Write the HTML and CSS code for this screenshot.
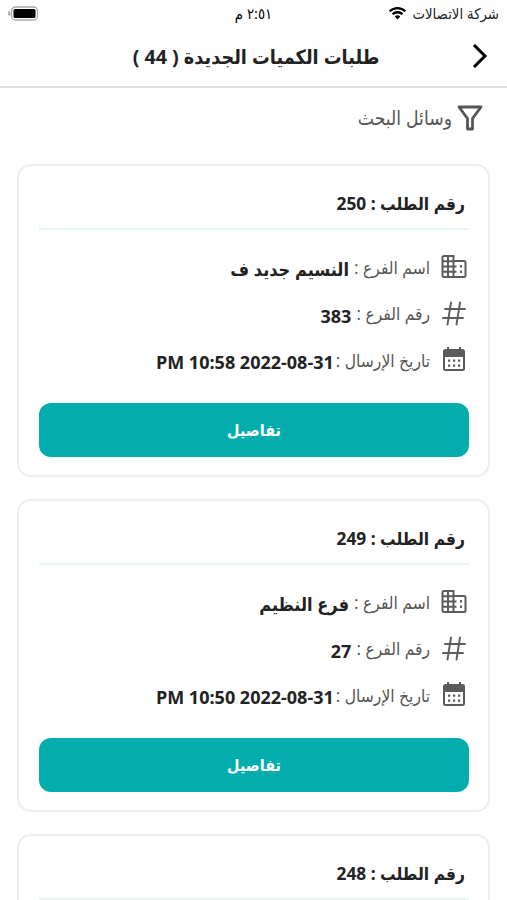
FILE: index.html
```html
<!DOCTYPE html>
<html lang="ar" dir="rtl">
<head>
    <meta charset="UTF-8">
    <meta name="viewport" content="width=device-width, initial-scale=1.0">
    <title>طلبات الكميات الجديدة</title>
    <link rel="stylesheet" href="styles.css">
</head>
<body>
    <!-- Shared icons -->
    <svg class="icon-defs" width="0" height="0">
        <symbol id="icon-branch" viewBox="0 0 26 26">
            <path d="M3 2h9.500v21H3a1.500 1.500 0 0 1-1.500-1.500v-18A1.500 1.500 0 0 1 3 2zM12.500 7H23a1.500 1.500 0 0 1 1.500 1.500v13A1.500 1.500 0 0 1 23 23H12.500zM7 2v21M1.500 7.200h11M1.500 12.500h14M1.500 17.700h14" fill="none" stroke="currentColor" stroke-width="2"/>
            <path d="M19 11h2v2.500h-2zM19 16.500h2V19h-2z" fill="currentColor"/>
        </symbol>
        <symbol id="icon-hash" viewBox="0 0 26 26">
            <path d="M10 1.500L6.500 23.500M19 1.500l-3.500 22M4 8h20M2 17h20" fill="none" stroke="currentColor" stroke-width="1.900" stroke-linecap="round"/>
        </symbol>
        <symbol id="icon-date" viewBox="0 0 26 26">
            <path d="M7 0v4M19 0v4" stroke="currentColor" stroke-width="2"/>
            <path d="M4.500 2h17A2.500 2.500 0 0 1 24 4.500v17a2.500 2.500 0 0 1-2.500 2.500h-17A2.500 2.500 0 0 1 2 21.500v-17A2.500 2.500 0 0 1 4.500 2zM4 10v12h18V10z" fill="currentColor" fill-rule="evenodd"/>
            <path d="M7 12.500h2.200v2.200H7zM12 12.500h2.200v2.200H12zM17 12.500h2.200v2.200H17zM7 17.500h2.200v2.200H7zM12 17.500h2.200v2.200H12zM17 17.500h2.200v2.200H17z" fill="currentColor"/>
        </symbol>
    </svg>

    <!-- Status bar -->
    <div class="status-bar">
        <div class="carrier">
            <span>شركة الاتصالات</span>
            <svg class="wifi" viewBox="0 0 18 14">
                <path d="M1.200 5.300a11 11 0 0 1 15.600 0M4 8.300a7.100 7.100 0 0 1 10 0" fill="none" stroke="#000" stroke-width="2.300"/>
                <path d="M9 13.500l-2.800-3a4 4 0 0 1 5.600 0z" fill="#000"/>
            </svg>
        </div>
        <div class="time">٢:٥١ م</div>
        <svg class="battery" viewBox="0 0 31 15">
            <rect x="3.500" y="1" width="26" height="13" rx="4" fill="#fff" stroke="#a9a9a9" stroke-width="1.300"/>
            <rect x="5.500" y="3" width="22" height="9" rx="1.500" fill="#000"/>
            <path d="M2 5.500v4a2 2 0 0 1 0-4z" fill="#a9a9a9" stroke="#a9a9a9" stroke-width=".6"/>
        </svg>
    </div>

    <!-- Page header -->
    <header class="header">
        <svg class="back" viewBox="0 0 16 26">
            <path d="M2 2l11 11L2 24" fill="none" stroke="#000" stroke-width="3"/>
        </svg>
        <h1>طلبات الكميات الجديدة ( 44 )</h1>
    </header>

    <div class="filter">
        <svg class="funnel" viewBox="0 0 26 26">
            <path d="M2 2h22l-8.500 11.500V24h-5V13.500z" fill="none" stroke="currentColor" stroke-width="2.800" stroke-linejoin="round"/>
        </svg>
        <span>وسائل البحث</span>
    </div>

    <!-- Orders -->
    <main class="orders">
        <section class="card">
            <h2>رقم الطلب : 250</h2>
            <div class="row">
                <svg class="icon"><use href="#icon-branch"/></svg>
                <span class="label">اسم الفرع :</span>
                <b class="value">النسيم جديد ف</b>
            </div>
            <div class="row">
                <svg class="icon"><use href="#icon-hash"/></svg>
                <span class="label">رقم الفرع :</span>
                <b class="value">383</b>
            </div>
            <div class="row">
                <svg class="icon"><use href="#icon-date"/></svg>
                <span class="label date-label">تاريخ الإرسال :</span>
                <b class="value" dir="ltr">PM 10:58 2022-08-31</b>
            </div>
            <button class="details-btn">تفاصيل</button>
        </section>

        <section class="card">
            <h2>رقم الطلب : 249</h2>
            <div class="row">
                <svg class="icon"><use href="#icon-branch"/></svg>
                <span class="label">اسم الفرع :</span>
                <b class="value">فرع النظيم</b>
            </div>
            <div class="row">
                <svg class="icon"><use href="#icon-hash"/></svg>
                <span class="label">رقم الفرع :</span>
                <b class="value">27</b>
            </div>
            <div class="row">
                <svg class="icon"><use href="#icon-date"/></svg>
                <span class="label date-label">تاريخ الإرسال :</span>
                <b class="value" dir="ltr">PM 10:50 2022-08-31</b>
            </div>
            <button class="details-btn">تفاصيل</button>
        </section>

        <section class="card last-card">
            <h2>رقم الطلب : 248</h2>
        </section>
    </main>
</body>
</html>
```
FILE: styles.css
```css
* {
    box-sizing: border-box;
}

body {
    margin: 0;
    background: #fefefe;
    color: #222;
    font-family: "Open Sans", "DejaVu Sans Condensed", "DejaVu Sans", sans-serif;
    white-space: nowrap;
}

.icon-defs {
    display: none;
}

/* Status bar */
.status-bar {
    display: grid;
    grid-template-columns: 1fr auto 1fr;
    align-items: center;
    height: 26px;
    padding: 0 8px;
    font-size: 14.8px;
    color: #222;
}

.carrier {
    display: flex;
    align-items: center;
    gap: 5px;
}

.wifi {
    width: 19px;
    height: 14px;
}

.time {
    color: #000;
}

.battery {
    width: 31px;
    height: 15px;
    justify-self: end;
}

/* Header */
.header {
    display: grid;
    grid-template-columns: 33px 1fr 39px;
    align-items: center;
    height: 62px;
    padding: 0 19px 0 18px;
    border-bottom: 2px solid #e0e0e0;
}

.back {
    width: 16px;
    height: 26px;
}

h1 {
    margin: 0;
    font-size: 19.7px;
    font-weight: 700;
    text-align: center;
}

/* Search filter */
.filter {
    display: flex;
    align-items: center;
    gap: 5px;
    height: 59px;
    padding-right: 24px;
    color: #555;
    font-size: 19.2px;
}

.funnel {
    width: 26px;
    height: 26px;
}

/* Order cards */
.orders {
    display: flex;
    flex-direction: column;
    gap: 22px;
    padding: 17px 17px 0;
}

.card {
    height: 313px;
    padding: 0 19px 0 20px;
    border: 2px solid #ededed;
    border-radius: 14px;
    background: #fff;
    flex: none;
}

.last-card {
    height: 66px;
    border-bottom: none;
    border-radius: 14px 14px 0 0;
}

h2 {
    display: flex;
    align-items: center;
    height: 64px;
    margin: 0 0 14px;
    padding: 12px 4px 0 0;
    border-bottom: 2px solid #e4f5f2;
    font-size: 17.3px;
    font-weight: 700;
}

.last-card h2 {
    margin-bottom: 0;
}

.row {
    display: flex;
    align-items: center;
    height: 46.5px;
    padding-right: 2px;
}

.icon {
    width: 26px;
    height: 26px;
    margin-left: 11px;
    color: #5c5c5c;
}

.label {
    color: #555;
    font-size: 17.3px;
    margin-left: 5px;
}

.date-label {
    margin-left: 2px;
}

.value {
    font-size: 18px;
    padding-top: 4px;
}

.details-btn {
    display: block;
    width: 100%;
    height: 54px;
    margin-top: 19.5px;
    border: none;
    border-radius: 12px;
    background: #03adae;
    color: #fff;
    font-family: inherit;
    font-size: 16px;
    font-weight: 700;
    cursor: pointer;
}
```
